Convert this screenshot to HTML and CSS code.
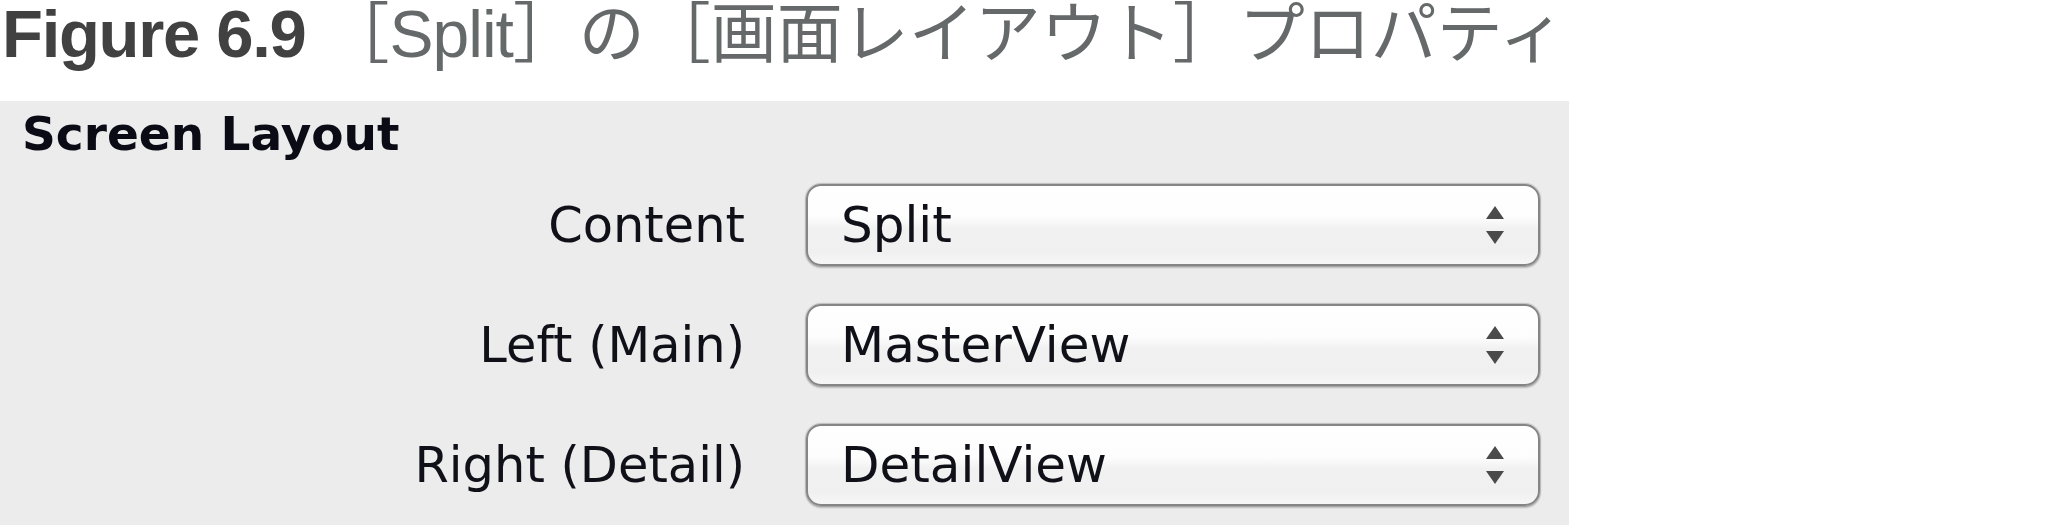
FILE: index.html
```html
<!DOCTYPE html>
<html lang="ja">
<head>
<meta charset="utf-8">
<title>Figure 6.9</title>
<link rel="stylesheet" href="styles.css">
</head>
<body>
  <div class="caption">
    <span class="fig-num">Figure 6.9</span><span class="fig-text">［<span class="latin">Split</span>］の［画面レイアウト］プロパティ</span>
  </div>
  <section class="panel">
    <h2 class="panel-title">Screen Layout</h2>
    <div class="form">
      <div class="label">Content</div>
      <div class="popup">
        <span class="popup-value">Split</span>
        <svg class="stepper" width="20" height="40" viewBox="0 0 20 40"><polygon points="10,1 19,14 1,14"/><polygon points="1,26 19,26 10,39"/></svg>
      </div>
      <div class="label">Left (Main)</div>
      <div class="popup">
        <span class="popup-value">MasterView</span>
        <svg class="stepper" width="20" height="40" viewBox="0 0 20 40"><polygon points="10,1 19,14 1,14"/><polygon points="1,26 19,26 10,39"/></svg>
      </div>
      <div class="label">Right (Detail)</div>
      <div class="popup">
        <span class="popup-value">DetailView</span>
        <svg class="stepper" width="20" height="40" viewBox="0 0 20 40"><polygon points="10,1 19,14 1,14"/><polygon points="1,26 19,26 10,39"/></svg>
      </div>
    </div>
  </section>
</body>
</html>
```

FILE: styles.css
```css
html, body {
  margin: 0;
  padding: 0;
  background: #ffffff;
}

body {
  width: 2048px;
  height: 527px;
  overflow: hidden;
}

.caption {
  height: 101px;
  box-sizing: border-box;
  padding: 0 0 0 2px;
  line-height: 57px;
  white-space: nowrap;
}

.fig-num {
  display: inline-block;
  line-height: 57px;
  font-family: "Liberation Sans", Arial, sans-serif;
  font-weight: bold;
  font-size: 67px;
  letter-spacing: -1.3px;
  color: #414141;
}

.fig-text {
  display: inline-block;
  line-height: 57px;
  margin-left: 18px;
  font-family: "Noto Sans CJK JP", sans-serif;
  font-size: 66px;
  font-weight: 400;
  color: #656969;
}

.fig-text .latin {
  font-family: "Liberation Sans", Arial, sans-serif;
  font-weight: normal;
  letter-spacing: -1px;
}

.panel {
  width: 1569px;
  height: 424px;
  box-sizing: border-box;
  background: #ececec;
  padding: 7px 0 0 0;
}

.panel-title {
  margin: 0 0 0 22px;
  font-family: "DejaVu Sans", Verdana, sans-serif;
  font-weight: bold;
  font-size: 47px;
  line-height: 52px;
  color: #0b0b16;
  filter: blur(0.4px);
}

.form {
  display: grid;
  grid-template-columns: 745px 734px;
  column-gap: 61px;
  row-gap: 38px;
  margin-top: 24px;
  align-items: center;
}

.label {
  text-align: right;
  font-family: "DejaVu Sans", Verdana, sans-serif;
  font-size: 49.5px;
  line-height: 58px;
  color: #101018;
  filter: blur(0.4px);
}

.popup {
  height: 82px;
  box-sizing: border-box;
  display: flex;
  align-items: center;
  justify-content: space-between;
  padding: 0 33px 0 33px;
  border: 2px solid #858585;
  border-radius: 15px;
  background: linear-gradient(#ffffff 0%, #fdfdfd 40%, #f1f1f1 55%, #f0f0f0 85%, #f6f6f6 100%);
  box-shadow: 0 0 1px 1px rgba(120, 120, 120, 0.4), 0 2px 2px rgba(0, 0, 0, 0.2);
}

.popup-value {
  font-family: "DejaVu Sans", Verdana, sans-serif;
  font-size: 50px;
  line-height: 58px;
  color: #101018;
  filter: blur(0.4px);
}

.stepper {
  fill: #4a4a4a;
  display: block;
  filter: blur(0.6px);
}
```
